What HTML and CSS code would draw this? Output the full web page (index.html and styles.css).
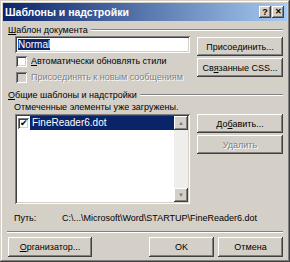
FILE: index.html
```html
<!DOCTYPE html>
<html lang="ru">
<head>
    <meta charset="UTF-8">
    <title>Шаблоны и надстройки</title>
    <link rel="stylesheet" href="styles.css">
</head>
<body>
    <div class="window">
        <div class="titlebar">
            <span class="title">Шаблоны и надстройки</span>
            <div class="title-buttons">
                <span class="tbtn">?</span>
                <span class="tbtn tbtn-close">✕</span>
            </div>
        </div>

        <div class="content">
            <div class="group-head"><span><u>Ш</u>аблон документа</span><div class="groove"></div></div>

            <div class="row row-doc">
                <div class="col-left">
                    <div class="textbox"><span class="sel">Normal</span></div>
                    <div class="check"><span class="box"></span><span><u>А</u>втоматически обновлять стили</span></div>
                    <div class="check disabled"><span class="box"></span><span>Присоединять к новым сообщениям</span></div>
                </div>
                <div class="col-right">
                    <div class="btn"><span>Присое<u>д</u>инить...</span></div>
                    <div class="btn"><span>Св<u>я</u>занные CSS...</span></div>
                </div>
            </div>

            <div class="group-head group-two"><span><u>О</u>бщие шаблоны и надстройки</span><div class="groove"></div></div>
            <div class="note">Отмеченные элементы уже загружены.</div>

            <div class="row row-list">
                <div class="listbox">
                    <div class="items">
                        <div class="item"><span class="box checked">✔</span><span class="item-text">FineReader6.dot</span></div>
                    </div>
                    <div class="scrollbar">
                        <div class="sbtn">▲</div>
                        <div class="track"></div>
                        <div class="sbtn">▼</div>
                    </div>
                </div>
                <div class="col-right">
                    <div class="btn"><span>До<u>б</u>авить...</span></div>
                    <div class="btn disabled"><span>Удалить</span></div>
                </div>
            </div>

            <div class="path">
                <span class="path-label">Путь:</span>
                <span>C:\...\Microsoft\Word\STARTUP\FineReader6.dot</span>
            </div>

            <div class="separator"></div>

            <div class="footer">
                <div class="btn btn-org"><span><u>О</u>рганизатор...</span></div>
                <div class="footer-right">
                    <div class="btn btn-ok"><span>OK</span></div>
                    <div class="btn btn-ok"><span>Отмена</span></div>
                </div>
            </div>
        </div>
    </div>
</body>
</html>
```

FILE: styles.css
```css
body {
margin: 0;
background: #d4d0c8;
font-family: "Liberation Sans", Arial, sans-serif;
font-size: 9px;
color: #000;
}

.window {
width: 290px;
height: 262px;
box-sizing: border-box;
padding: 3px;
background: #d4d0c8;
box-shadow: inset -1px -1px #404040, inset 1px 1px #d4d0c8, inset -2px -2px #808080, inset 2px 2px #fff;
}

.titlebar {
height: 18px;
display: flex;
align-items: center;
justify-content: space-between;
background: linear-gradient(to right, #0a246a, #a6caf0);
color: #fff;
padding-left: 2px;
}

.title {
font-weight: bold;
font-size: 10.5px;
}

.title-buttons {
display: flex;
margin-right: 3px;
}

.tbtn {
width: 12px;
height: 12px;
box-sizing: border-box;
background: #d4d0c8;
color: #000;
font-weight: bold;
font-size: 9px;
line-height: 12px;
text-align: center;
box-shadow: inset -1px -1px #404040, inset 1px 1px #fff, inset -2px -2px #808080;
}

.tbtn-close {
margin-left: 1px;
font-size: 8px;
}

.content {
padding: 0 4px;
}

/* заголовки групп */
.group-head {
display: flex;
align-items: center;
height: 13px;
margin-top: 2px;
padding-left: 1px;
}

.group-head span {
white-space: nowrap;
padding-right: 3px;
}

.groove {
flex: 1;
border-top: 1px solid #808080;
border-bottom: 1px solid #fff;
margin-top: 1px;
}

.group-two {
margin-top: 3px;
}

.row {
display: flex;
justify-content: space-between;
padding-left: 8px;
}

.col-left {
width: 175px;
}

.col-right {
width: 86px;
display: flex;
flex-direction: column;
gap: 2px;
}

.row-doc .col-right {
margin-top: 1px;
}

.textbox {
height: 17px;
box-sizing: border-box;
background: #fff;
padding: 2px 3px;
font-size: 10px;
line-height: 13px;
box-shadow: inset 1px 1px #808080, inset -1px -1px #fff, inset 2px 2px #404040, inset -2px -2px #d4d0c8;
}

.sel {
background: #0a246a;
color: #fff;
}

.check {
display: flex;
align-items: center;
height: 16px;
gap: 4px;
padding-left: 1px;
white-space: nowrap;
}

.check:first-of-type {
margin-top: 1px;
}

.box {
width: 11px;
height: 11px;
box-sizing: border-box;
background: #fff;
box-shadow: inset 1px 1px #808080, inset -1px -1px #fff, inset 2px 2px #404040, inset -2px -2px #d4d0c8;
flex-shrink: 0;
}

.disabled {
color: #808080;
text-shadow: 1px 1px #fff;
}

.disabled .box {
background: #d4d0c8;
}

.btn {
height: 19px;
box-sizing: border-box;
display: flex;
align-items: center;
justify-content: center;
white-space: nowrap;
background: #d4d0c8;
box-shadow: inset -1px -1px #404040, inset 1px 1px #fff, inset -2px -2px #808080;
}

.note {
height: 13px;
line-height: 13px;
padding-left: 7px;
}

.listbox {
width: 175px;
height: 90px;
box-sizing: border-box;
display: flex;
padding: 2px;
background: #fff;
box-shadow: inset 1px 1px #808080, inset -1px -1px #fff, inset 2px 2px #404040, inset -2px -2px #d4d0c8;
}

.items {
flex: 1;
}

.item {
display: flex;
align-items: center;
height: 14px;
}

.box.checked {
font-size: 9px;
line-height: 11px;
text-align: center;
color: #000;
margin: 0 1px 0 1px;
}

.item-text {
flex: 1;
height: 14px;
line-height: 14px;
background: #0a246a;
color: #fff;
padding-left: 2px;
font-size: 10px;
}

.scrollbar {
width: 14px;
display: flex;
flex-direction: column;
}

.sbtn {
height: 14px;
background: #d4d0c8;
color: #808080;
font-size: 6px;
line-height: 14px;
text-align: center;
box-shadow: inset -1px -1px #404040, inset 1px 1px #fff, inset -2px -2px #808080;
}

.track {
flex: 1;
background: #f0eeea;
}

.path {
display: flex;
height: 13px;
line-height: 13px;
margin-top: 8px;
padding-left: 7px;
white-space: nowrap;
}

.path-label {
width: 48px;
flex-shrink: 0;
}

.separator {
margin-top: 6px;
border-top: 1px solid #808080;
border-bottom: 1px solid #fff;
}

.footer {
display: flex;
justify-content: space-between;
margin-top: 4px;
padding-left: 1px;
}

.btn-org {
width: 84px;
height: 20px;
}

.footer-right {
display: flex;
gap: 4px;
}

.btn-ok {
width: 65px;
height: 20px;
}
```
